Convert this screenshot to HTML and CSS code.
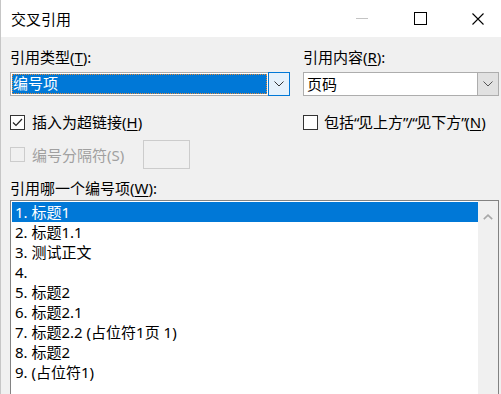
FILE: index.html
```html
<!DOCTYPE html>
<html lang="zh-CN">
<head>
<meta charset="utf-8">
<title>交叉引用</title>
<link rel="stylesheet" href="styles.css">
</head>
<body>
<div class="window">
  <div class="titlebar">
    <div class="title">交叉引用</div>
    <div class="controls">
      <div class="ctl"><span class="min-line"></span></div>
      <div class="ctl"><span class="max-box"></span></div>
      <div class="ctl close">
        <svg width="12" height="12" viewBox="0 0 12 12"><path d="M0.5 0.5 L11.5 11.5 M11.5 0.5 L0.5 11.5" stroke="#000" stroke-width="1.1" fill="none"/></svg>
      </div>
    </div>
  </div>
  <div class="content">
    <div class="grid">
      <div class="field">
        <div class="label">引用类型(<u>T</u>):</div>
        <div class="combo focused">
          <div class="combo-value"><span class="sel">编号项</span></div>
          <div class="combo-btn">
            <svg width="10" height="6" viewBox="0 0 10 6"><path d="M0.5 0.5 L5 5 L9.5 0.5" stroke="#333" stroke-width="1" fill="none"/></svg>
          </div>
        </div>
      </div>
      <div class="field">
        <div class="label">引用内容(<u>R</u>):</div>
        <div class="combo">
          <div class="combo-value plain">页码</div>
          <div class="combo-btn">
            <svg width="10" height="6" viewBox="0 0 10 6"><path d="M0.5 0.5 L5 5 L9.5 0.5" stroke="#555" stroke-width="1" fill="none"/></svg>
          </div>
        </div>
      </div>
    </div>
    <div class="grid checks">
      <div class="check">
        <span class="box">
          <svg width="13" height="13" viewBox="0 0 13 13"><path d="M2 6.5 L5 9.5 L11 3" stroke="#222" stroke-width="1.2" fill="none"/></svg>
        </span>
        <span>插入为超链接(<u>H</u>)</span>
      </div>
      <div class="check right">
        <span class="box"></span>
        <span>包括<span class="q">“</span>见上方<span class="q">”</span><span class="s">/</span><span class="q">“</span>见下方<span class="q">”</span>(<u>N</u>)</span>
      </div>
    </div>
    <div class="sep-row">
      <div class="check disabled">
        <span class="box"></span>
        <span>编号分隔符(S)</span>
      </div>
      <div class="sep-input"></div>
    </div>
    <div class="label list-label">引用哪一个编号项(<u>W</u>):</div>
    <div class="list">
      <div class="items">
        <div class="item selected">1. 标题1</div>
        <div class="item">2. 标题1.1</div>
        <div class="item">3. 测试正文</div>
        <div class="item">4.</div>
        <div class="item">5. 标题2</div>
        <div class="item">6. 标题2.1</div>
        <div class="item">7. 标题2.2 (占位符1页 1)</div>
        <div class="item">8. 标题2</div>
        <div class="item">9. (占位符1)</div>
      </div>
      <div class="scrollbar">
        <svg width="10" height="6" viewBox="0 0 10 6"><path d="M0.8 5.2 L5 1.2 L9.2 5.2" stroke="#a8a8a8" stroke-width="1.6" fill="none"/></svg>
      </div>
    </div>
  </div>
</div>
</body>
</html>
```

FILE: styles.css
```css
* { box-sizing: border-box; }
html, body {
  margin: 0;
  padding: 0;
  width: 501px;
  height: 394px;
  overflow: hidden;
}
body {
  font-family: "Noto Sans", "Noto Sans CJK SC", sans-serif;
  font-size: 15px;
  color: #000;
  background: #f0f0f0;
}
u { text-decoration: underline; text-underline-offset: 2px; text-decoration-thickness: 1px; }

.window {
  width: 501px;
  height: 394px;
  background: #f0f0f0;
  border-left: 1px solid #c6c6c6;
  display: flex;
  flex-direction: column;
}

.titlebar {
  height: 37px;
  flex: none;
  background: #fff;
  display: flex;
  align-items: center;
}
.title {
  padding-left: 10px;
  line-height: 20px;
  flex: 1;
}
.controls {
  display: flex;
  height: 37px;
  margin-right: -6px;
}
.ctl {
  width: 58px;
  height: 37px;
  display: flex;
  align-items: center;
  justify-content: center;
}
.min-line {
  display: block;
  width: 12px;
  height: 1px;
  background: #c4c4c4;
}
.max-box {
  display: block;
  width: 13px;
  height: 13px;
  border: 1px solid #000;
}

.content {
  flex: 1;
  padding: 10px 2px 0 9px;
  display: flex;
  flex-direction: column;
}

.grid {
  display: grid;
  grid-template-columns: 280px 196px;
  column-gap: 13px;
}
.label {
  line-height: 20px;
  height: 20px;
  white-space: nowrap;
}
.combo {
  margin-top: 5px;
  height: 24px;
  border: 1px solid #adadad;
  background: #fff;
  display: flex;
}
.combo-value {
  flex: 1;
  padding: 1px;
  display: flex;
}
.combo-value.plain {
  padding-left: 3px;
  line-height: 22px;
  padding-top: 0;
}
.sel {
  flex: 1;
  background: #0078d7;
  color: #fff;
  line-height: 18px;
  padding-left: 1px;
  outline: 1px dotted #e08a3c;
  outline-offset: -1px;
}
.combo-btn {
  width: 21px;
  flex: none;
  display: flex;
  align-items: center;
  justify-content: center;
  background: #e1e1e1;
  border-left: 1px solid #adadad;
}
.focused .combo-btn {
  background: #e5f1fb;
  border: 1px solid #0078d7;
  margin: -1px -1px -1px 0;
  width: 22px;
}

.checks {
  margin-top: 16px;
}
.check {
  display: flex;
  align-items: center;
  height: 20px;
  line-height: 20px;
  white-space: nowrap;
}
.q {
  letter-spacing: -1.4px;
}
.s {
  letter-spacing: -0.4px;
}
.box {
  width: 15px;
  height: 15px;
  flex: none;
  border: 1px solid #333;
  background: #fff;
  margin-right: 7px;
  display: flex;
  align-items: center;
  justify-content: center;
}
.check.right .box { margin-right: 6px; }
.check.disabled { color: #a0a0a0; width: 133px; }
.check.disabled .box { border-color: #cccccc; background: #f0f0f0; }

.sep-row {
  margin-top: 8px;
  height: 29px;
  display: flex;
  align-items: center;
}
.sep-input {
  width: 47px;
  height: 29px;
  border: 1px solid #cccccc;
  background: #f0f0f0;
}

.list-label {
  margin-top: 9px;
}
.list {
  margin-top: 2px;
  flex: 1;
  border: 1px solid #828282;
  border-bottom: none;
  background: #fff;
  display: flex;
  padding: 1px 0 0 1px;
}
.items {
  flex: 1;
}
.item {
  height: 20px;
  line-height: 20px;
  padding-left: 3px;
  white-space: nowrap;
}
.item.selected {
  background: #0078d7;
  color: #fff;
}
.scrollbar {
  width: 20px;
  flex: none;
  background: #f0f0f0;
  margin-top: -1px;
  display: flex;
  justify-content: center;
  padding-top: 13px;
}
.scrollbar svg { display: block; }
```
